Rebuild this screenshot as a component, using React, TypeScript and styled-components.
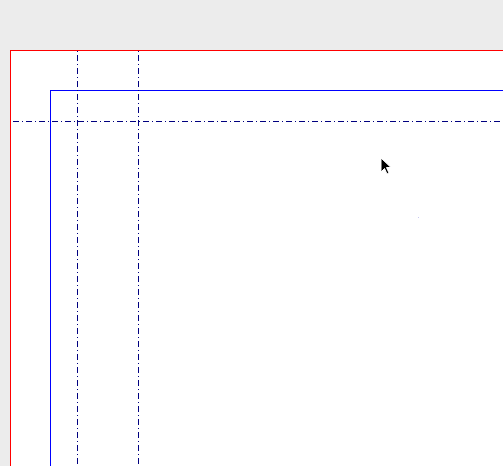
import React from 'react'
import styled, { createGlobalStyle } from 'styled-components'

const GlobalStyle = createGlobalStyle`
  html, body {
    margin: 0;
    padding: 0;
    background: #ececec;
    overflow: hidden;
  }
`

const Viewport = styled.div`
  position: relative;
  width: 503px;
  height: 466px;
  overflow: hidden;
  background: #ececec;
  padding: 50px 0 0 10px;
  box-sizing: border-box;
`

const Page = styled.div`
  height: 100%;
  background: #ffffff;
  border-top: 1px solid #ff0000;
  border-left: 1px solid #ff0000;
  padding: 39px 0 0 39px;
  box-sizing: border-box;
`

const Margin = styled.div`
  height: 100%;
  border-top: 1px solid #0000ff;
  border-left: 1px solid #0000ff;
  box-sizing: border-box;
`

const Guides = styled.svg`
  position: absolute;
  left: 0;
  top: 0;
  pointer-events: none;
`

const Cursor = styled.svg`
  position: absolute;
  left: 379px;
  top: 157px;
`

const Speck = styled.div`
  position: absolute;
  left: 418px;
  top: 217px;
  width: 1px;
  height: 1px;
  background: #c8c8f0;
`

const DASH = '6 3 1 3'

export default function App() {
  return (
    <>
      <GlobalStyle />
      <Viewport>
        <Page>
          <Margin />
        </Page>
        <Guides width={503} height={466} shapeRendering="crispEdges">
          <line x1={13} y1={121.5} x2={503} y2={121.5} stroke="#00007f" strokeDasharray={DASH} />
          <line x1={77.5} y1={51} x2={77.5} y2={466} stroke="#00007f" strokeDasharray={DASH} strokeDashoffset={9} />
          <line x1={138.5} y1={51} x2={138.5} y2={466} stroke="#00007f" strokeDasharray={DASH} strokeDashoffset={9} />
        </Guides>
        <Speck />
        <Cursor width={14} height={20} viewBox="0 0 14 20">
          <path
            d="M2 1 L2 15 L5.5 11.5 L8 17 L10 16 L7.5 10.5 L12 10.5 Z"
            fill="#000"
            stroke="#fff"
            strokeWidth={1}
            strokeLinejoin="round"
          />
        </Cursor>
      </Viewport>
    </>
  )
}
